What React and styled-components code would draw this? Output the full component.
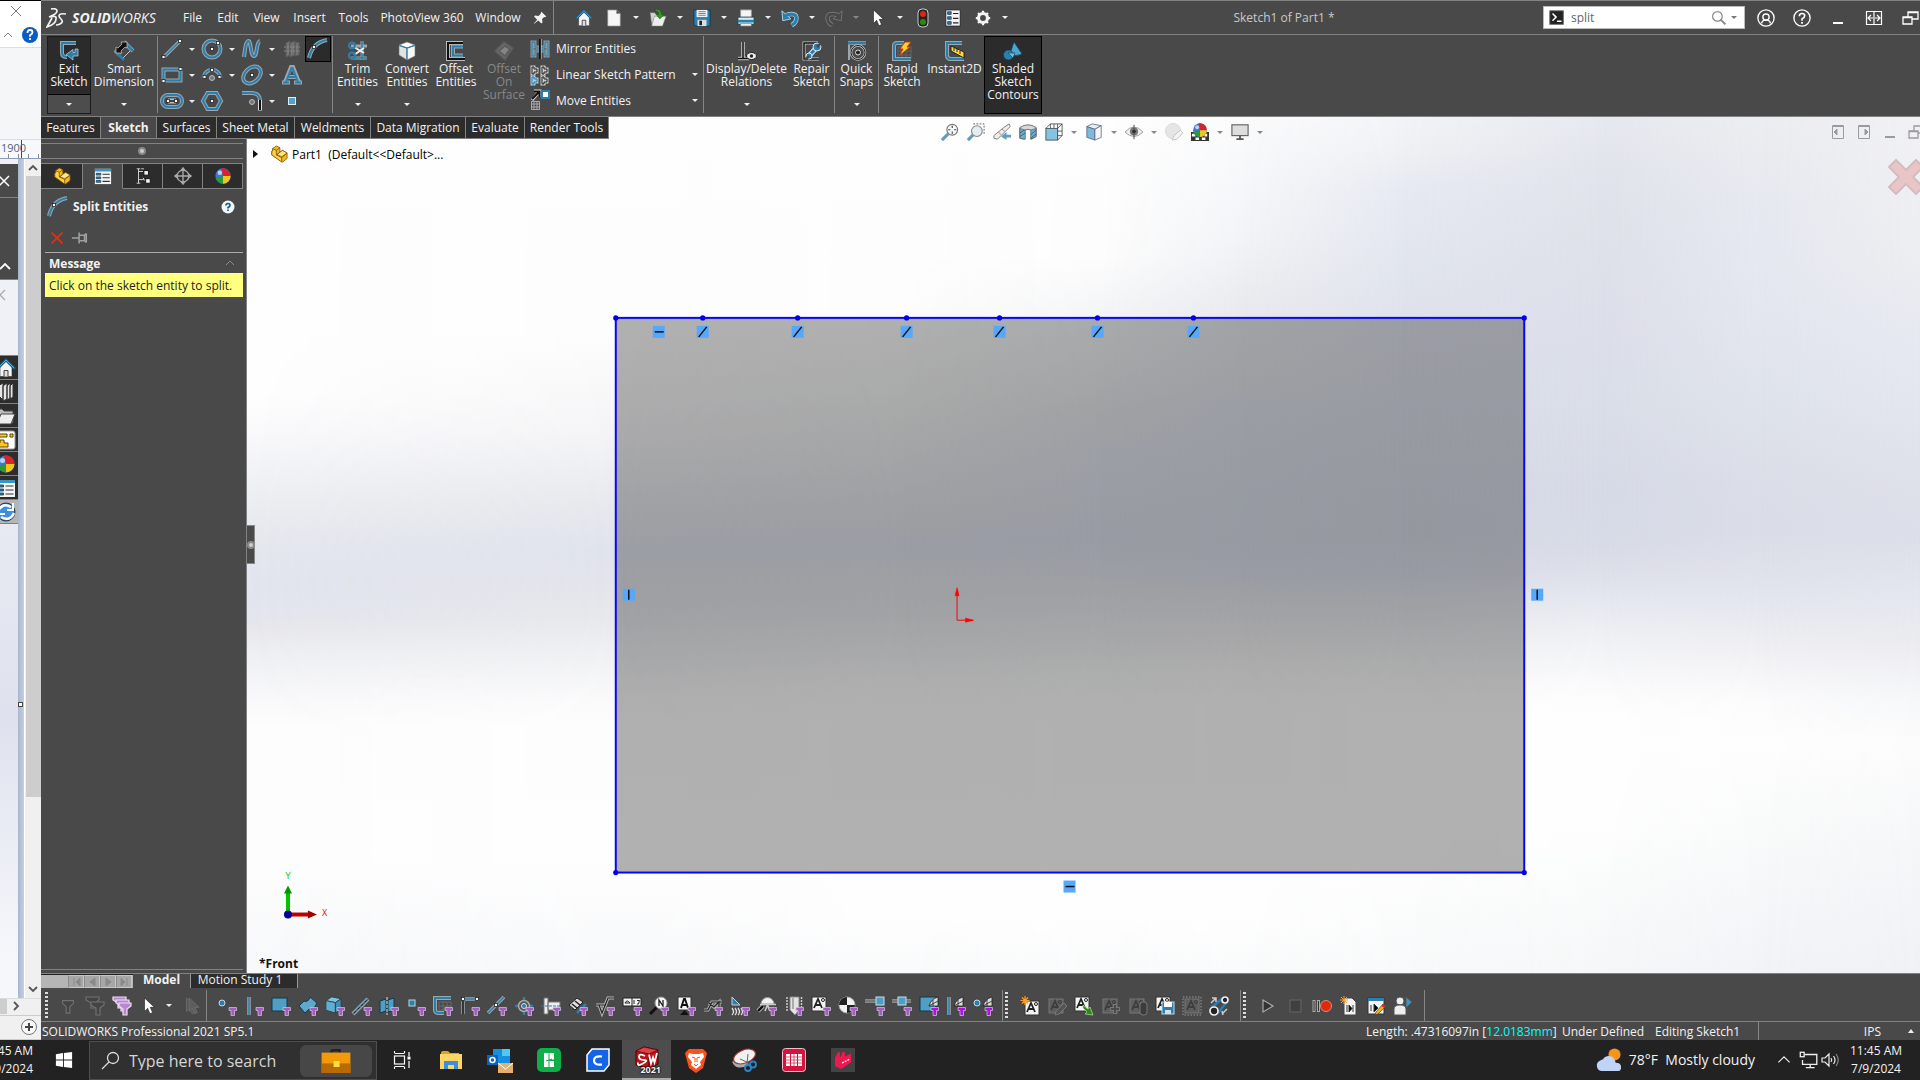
import React from "react";
import styled, { createGlobalStyle, css } from "styled-components";

const BLUE = "#2b7fae";
const RIM = "#9aa7ae";
const WHITE = "#f2f2f2";
const PANEL = "#494949";
const LINE = "#828282";

const Global = createGlobalStyle`
  *, *::before, *::after { box-sizing: border-box; }
  html, body { margin: 0; padding: 0; }
  body { overflow: hidden; background: #222; font: 12px/13px "Open Sans", "Noto Sans", sans-serif; color: ${WHITE}; }
  button, input { font: inherit; color: inherit; border: 0; padding: 0; margin: 0; background: none; border-radius: 0; }
  svg { display: block; flex: none; }
`;

/* ---------- icon drawing ---------- */

const Duo = ({ d, c = BLUE, w = 2, rim = RIM }) => (
  <g fill="none">
    <path d={d} stroke={rim} strokeWidth={w + 2} />
    <path d={d} stroke={c} strokeWidth={w} />
  </g>
);
const Pt = ({ x, y }) => <rect x={x - 1.5} y={y - 1.5} width="3" height="3" fill="#fff" stroke="#222" strokeWidth=".8" />;
const Funnel = ({ c = "#a35fc0" }) => <path d="M12 11.500h7.500v3h-2v5h-3.500v-5h-2z" fill={c} stroke="#dcc6e6" strokeWidth=".7" />;
const Pad = ({ off }) => (
  <g>
    <rect x="2" y="3" width="14" height="14" fill={off ? "#5e5e5e" : "#f4f4f4"} stroke={off ? "#777" : "#333"} />
    <path d="M4 14L8 5l4 9M5.500 11h5" stroke={off ? "#3d3d3d" : "#222"} strokeWidth="1.800" fill="none" />
    <circle cx="13" cy="6" r="1.500" fill="none" stroke={off ? "#3d3d3d" : "#222"} />
  </g>
);
const Ball = () => (
  <g>
    <circle cx="10" cy="10" r="8.500" fill="#3c78d8" />
    <path d="M10 10L8 1.700A8.500 8.500 0 0 1 18.500 10z" fill="#d8232a" />
    <path d="M10 10l8.500 0A8.500 8.500 0 0 1 10 18.500z" fill="#f3c51b" />
    <path d="M10 10v8.500A8.500 8.500 0 0 1 1.800 12z" fill="#2c9a37" />
    <circle cx="6.500" cy="6.500" r="2.500" fill="#fff" opacity=".65" />
  </g>
);
const House = () => (
  <g>
    <path d="M4 9v9.500h12V9l-6-6z" fill="#f4f4f4" stroke="#333" strokeWidth=".6" />
    <path d="M8 18.500v-6h4v6" fill="#ddd" stroke="#444" />
    <path d="M1 11L10 2l9 9" fill="none" stroke="#155e86" strokeWidth="2.800" />
    <path d="M2 10l8-8 8 8" fill="none" stroke="#5bb0d6" strokeWidth="1" />
  </g>
);
const PartShape = () => (
  <g stroke="#6b4b00" strokeWidth=".8" strokeLinejoin="round">
    <path d="M3 4l4-3 4 2v5l3-2 5 3v6l-5 4-12-8V7l1-.500z" fill="#f2b91c" />
    <path d="M3 4l4 2v5l6 3v5L2 11V7l1-.500z" fill="#ffd04a" />
    <path d="M7 6l4-3M7 11l4-3M13 14l6-5" fill="none" />
    <path d="M11 8l3-2 5 3-6 4-5-2z" fill="#ffe38a" />
  </g>
);
const ListShape = () => (
  <g>
    <rect x="1" y="2" width="18" height="17" fill="#f5f5f5" />
    <path d="M1 2h18v3H1z" fill="#3b95c1" />
    <path d="M2.500 7h5v2h-5zM2.500 11h5v2h-5zM2.500 15h5v2h-5z" fill={BLUE} stroke="#113a50" strokeWidth=".8" />
    <path d="M9.500 8h8M9.500 12h8M9.500 16h8" stroke="#333" strokeWidth="1.200" />
  </g>
);
const CursorShape = ({ c = "#fff", o = "#222" }) => <path d="M5 1v15l3.500-3.500L11 18.500l3-1.200-2.600-5.800H16z" fill={c} stroke={o} strokeWidth=".7" />;
const Cube = ({ a = "#7cc3e2", b = "#3b8fb8", c = "#5dafd4" }) => (
  <g stroke="#333" strokeWidth=".8" strokeLinejoin="round">
    <path d="M2 6l6-4 10 2-6 4z" fill={a} />
    <path d="M2 6l10 2v11L2 16z" fill={c} />
    <path d="M12 8l6-4v11l-6 4z" fill={b} />
  </g>
);

const glyphs = {
  /* ribbon */
  exit: <g><Duo d="M17 2H3v10q0 4 5 4" /><path d="M19 8v7h-5v4l-7-5.500 7-5v3h2V8z" fill={BLUE} stroke="#c8d4da" strokeWidth=".7" /></g>,
  smart: <g><path d="M2 10L10 2M9 17l8-8" stroke="#ccc" strokeWidth="1" /><path d="M1 9l5 5M10 1l9 9" stroke={RIM} strokeWidth="4" /><path d="M1 9l5 5M10 1l9 9" stroke={BLUE} strokeWidth="2.500" /><path d="M3 12l7 7" stroke={BLUE} strokeWidth="2.500" /><path d="M2 12V6l2 1 4-4-1-2h6v6l-2-1-4 4 1 2z" fill="#111" stroke="#ccc" strokeWidth=".7" /></g>,
  line: <g><Duo d="M2 18L18 2" w={1.500} /><Pt x={1.500} y={18} /><Pt x={18} y={2} /></g>,
  circle: <g><Duo d="M10 1.500a8.500 8.500 0 1 1 0 17a8.500 8.500 0 1 1 0-17z" /><Pt x={10} y={10} /><Pt x={16} y={4} /></g>,
  spline: <Duo d="M2 18C3 10 4 2 6.500 2S8.500 17 12 17 14 3 18 2" />,
  surfgrid: <g fill="#747474" stroke="#5a5a5a"><path d="M4 4l4-2v14l-4 2zM8 4l5-2v14l-5 2zM13 4l4-1v13l-4 1z" /><path d="M2 8h16M2 12h16" stroke="#8a8a8a" strokeDasharray="2 1" /></g>,
  split: <g><Duo d="M1 19C3 10 8 3 19 1" /><Pt x={6} y={8} /></g>,
  rect: <g><Duo d="M1.500 4.500h17v11h-17z" /><Pt x={1.500} y={16} /><Pt x={18.500} y={4} /></g>,
  arc: <g><Duo d="M1.500 13C3 2 17 2 18.500 13" /><circle cx="10" cy="13" r="2.500" fill="#777" stroke="#bbb" /><Pt x={2.500} y={12} /><Pt x={17.500} y={12} /><Pt x={10} y={5} /></g>,
  ellipse: <g><g transform="rotate(-42 10 10)"><Duo d="M0 10a10 7 0 1 1 20 0a10 7 0 1 1-20 0z" /></g><Pt x={10} y={10} /></g>,
  text: <g><path d="M0 17.500h8M12 17.500h8M3 17L9 2h2l6 15M6 12h8" stroke={RIM} strokeWidth="4" fill="none" /><path d="M1 17.500h6M13 17.500h6M4 17L9.500 3h1L16 17M7 12h6" stroke={BLUE} strokeWidth="2" fill="none" /></g>,
  slot: <g><Duo d="M6 4h8a5.500 5.500 0 0 1 0 12H6A5.500 5.500 0 0 1 6 4z" /><path d="M6 10h8" stroke="#b8c7cf" strokeWidth="5" /><path d="M5 10h10" stroke="#111" strokeWidth="1.500" /><Pt x={6} y={10} /><Pt x={14} y={10} /></g>,
  polygon: <g><Duo d="M5.500 2h9l4.500 8-4.500 8h-9L1 10z" /><Pt x={10} y={10} /></g>,
  fillet: <g><Duo d="M0 2h9c7 0 9 3 9 8" /><path d="M18 9v10.500" stroke="#ddd" strokeWidth="4" /><path d="M18 9v10" stroke="#111" strokeWidth="2" /><circle cx="10" cy="11" r="2.500" fill="#777" stroke="#bbb" /></g>,
  point: <rect x="6.500" y="6.500" width="7" height="7" fill="#4da3cc" stroke="#dfeef5" />,
  trim: <g><path d="M14 0v19M3 17h16M3 5h16" stroke={RIM} strokeWidth="3" /><path d="M14 0v19M3 17h16" stroke={BLUE} strokeWidth="1.500" /><path d="M6 6l10 6M6 14l10-7" stroke="#eee" strokeWidth="2" /><circle cx="4" cy="4.500" r="3" fill="none" stroke={BLUE} strokeWidth="2" /><circle cx="4" cy="14.500" r="3" fill="none" stroke={BLUE} strokeWidth="2" /></g>,
  convert: <g stroke="#777" strokeWidth=".6"><path d="M2 4l8-3 8 3-8 3z" fill="#fff" /><path d="M2 4l8 3v12l-8-5z" fill="#e2e2e2" /><path d="M10 7l8-3v11l-8 4z" fill="#f7f7f7" /><path d="M10 7v12M2 4.500L10 7l8-2.500" stroke={BLUE} strokeWidth="1.200" fill="none" /></g>,
  offset: <g><path d="M17 2H2v16h17" fill="none" stroke="#bbb" strokeWidth="4" /><path d="M17 2H2v16h17" fill="none" stroke="#111" strokeWidth="2" /><Duo d="M17 5.500H7v9h10" w={2} /></g>,
  offsurf: <g fill="#6a6a6a" stroke="#5a5a5a" strokeWidth="1.500"><path d="M1 10l9-9 9 6-8 12z" /><path d="M5 10l6-5 5 3-5 7z" fill="#858585" /></g>,
  mirror: <g><Duo d="M2 3h3v5h3v4H5v5H2zM18 3h-3v5h-3v4h3v5h3z" w={1} rim="#8a9aa2" /><path d="M10 0v20" stroke="#111" strokeWidth="2" /><path d="M11.300 0v20" stroke="#ccc" strokeWidth=".7" /></g>,
  pattern: <g><Duo d="M2 2h2v2h3v3H4v2H2zM12 2h2v2h3v3h-3v2h-2z" w={1} c="#222" rim="#ccc" /><Duo d="M12 12h2v2h3v3h-3v2h-2z" w={1} c="#222" rim="#ccc" /><Duo d="M2 12h2v2h3v3H4v2H2z" w={1} rim="#aaccdd" /></g>,
  move: <g><path d="M2 10L9 2M4 1h6v6" stroke="#ddd" strokeWidth="3" fill="none" /><path d="M2 9l7-7M4 1.500h5.500V7" stroke="#111" strokeWidth="2" fill="none" /><rect x="12" y="1" width="7" height="7" fill="#fff" stroke={BLUE} strokeWidth="2" /><path d="M1.500 11.500h8v8h-8zM4 11.500v8M7 11.500v8M1.500 14h8M1.500 17h8" fill="none" stroke="#aaa" /></g>,
  relations: <g><Duo d="M6 1v16M1 17.500h11" w={1.500} c="#111" rim="#ccc" /><ellipse cx="14.500" cy="15" rx="5" ry="3.500" fill="#eee" stroke="#222" /><circle cx="14.500" cy="15" r="1.700" fill="#222" /></g>,
  repair: <g><path d="M16 2H2v16h15" fill="none" stroke="#ccc" strokeWidth="3" /><path d="M16 2H2v16h15" fill="none" stroke="#111" strokeWidth="1.500" /><path d="M6 16l9-10" stroke="#d4e8f2" strokeWidth="5" /><path d="M6 16l9-10" stroke={BLUE} strokeWidth="3" /><circle cx="15" cy="6" r="4" fill={BLUE} stroke="#d4e8f2" /><circle cx="7" cy="15" r="3" fill={BLUE} stroke="#d4e8f2" /><path d="M15 6l4-4M7 15l-4 4" stroke="#494949" strokeWidth="2.500" /></g>,
  quick: <g><path d="M1 2h18" stroke={RIM} strokeWidth="3.500" /><path d="M1 2h18" stroke={BLUE} strokeWidth="2" /><path d="M2 4v15" stroke={RIM} strokeWidth="2" /><circle cx="11" cy="11.500" r="7" fill="none" stroke="#bbb" strokeWidth="2.500" /><circle cx="11" cy="11.500" r="7" fill="none" stroke="#222" strokeWidth="1" /><circle cx="11" cy="11.500" r="2.500" fill="#222" stroke="#ddd" /></g>,
  rapid: <g><path d="M6 6h13v12H6zM10 6v12M14 6v12M6 10h13M6 14h13" stroke="#666" fill="none" /><Duo d="M12 2H5Q2 2 2 5v13h17" /><path d="M13 1h6l-4 5h3L7 15l4-7H8z" fill="#ffcf2a" stroke="#c33a12" /></g>,
  instant: <g><Duo d="M17 2H2v12q0 4 4 4h13" /><path d="M6 5l13 6v6L6 10z" fill="#ffd84a" stroke="#222" /><path d="M9 7v3M12 8v3M15 10v3" stroke="#222" /></g>,
  shaded: <g stroke="#123c52" strokeWidth=".6"><path d="M11 1l8 12q-6 3-12 0z" fill="#4ba6cf" /><circle cx="5.500" cy="14" r="5" fill={BLUE} /><path d="M5 12h7l-2 5z" fill="#6dbbdd" /></g>,

  /* quick access */
  home: <House />,
  newdoc: <path d="M3 1h10l4 4v14H3zM13 1v4h4" fill="#f6f6f6" stroke="#888" strokeWidth=".8" />,
  open: <g><path d="M1 4h5l2 2h6v12H3z" fill="#d2d2d2" stroke="#555" strokeWidth=".7" /><path d="M6 8h13l-4 11H3z" fill="#eee" stroke="#777" strokeWidth=".6" /><path d="M7 0q7 0 7 6h3l-5 5-4-5h3q0-3-4-4z" fill="#2f9a1d" stroke="#0e5a05" strokeWidth=".6" /></g>,
  save: <g><path d="M1 1h18v18H3l-2-2z" fill={BLUE} stroke="#0e3a52" /><path d="M4 1h12v8H4z" fill="#f2f2f2" /><path d="M6 3h8M6 5h8M6 7h8" stroke="#777" /><path d="M5 12h10v7H5z" fill="#ddd" /><path d="M7 13h3v5H7z" fill="#222" /></g>,
  print: <g><path d="M4 1h12v9H4z" fill="#f6f6f6" stroke="#999" /><path d="M1 9h18v8H1z" fill="#d9eef8" stroke="#144" /><path d="M1 12h18v3H1z" fill={BLUE} /><path d="M4 16h12v3H4z" fill="#eee" stroke="#666" strokeWidth=".6" /></g>,
  undo: <g><path d="M5 7q13-4 12 4 0 4-5 7" fill="none" stroke="#b5dcef" strokeWidth="5" /><path d="M1 2l1 11 9-2z" fill={BLUE} stroke="#b5dcef" /><path d="M5 7q13-4 12 4 0 4-5 7" fill="none" stroke={BLUE} strokeWidth="3.500" /></g>,
  redo: <g><path d="M15 7Q2 3 3 11q0 4 5 7" fill="none" stroke="#777" strokeWidth="5" /><path d="M19 2l-1 11-9-2z" fill="#494949" stroke="#777" /><path d="M15 7Q2 3 3 11q0 4 5 7" fill="none" stroke="#494949" strokeWidth="3" /></g>,
  cursor: <CursorShape />,
  light: <g><rect x="5" y="1" width="10" height="18" rx="4" fill="#222" stroke="#ccc" /><circle cx="10" cy="6" r="3" fill="#d8280f" /><circle cx="10" cy="14" r="3" fill="#2c8a14" /></g>,
  options: <g><rect x="2" y="1" width="16" height="18" fill="#f4f4f4" stroke="#222" /><path d="M4 3h4v3H4zM4 8.500h4v3H4zM4 14h4v3H4z" fill={BLUE} stroke="#123" strokeWidth=".7" /><path d="M10 5h6M10 10.500h6M10 15.500h6" stroke="#222" strokeWidth="1.300" /></g>,
  gear: <g><circle cx="10" cy="10" r="5" fill="none" stroke="#f4f4f4" strokeWidth="3.500" /><path d="M10 2v3M10 15v3M2 10h3M15 10h3M4.500 4.500l2 2M13.500 13.500l2 2M4.500 15.500l2-2M13.500 6.500l2-2" stroke="#f4f4f4" strokeWidth="2.500" /></g>,
  pushpin: <path d="M12 1l7 7-2 1-1-.500-3 3 .5 5-1.500 1.500-4.500-4.500L2 18l-1 .5.500-1 4.500-5L1.500 8 3 6.500l5 .5 3-3L11 3z" fill="#f2f2f2" />,

  /* window controls */
  user: <g fill="none" stroke="#fff" strokeWidth="1.500"><circle cx="10" cy="10" r="9" /><circle cx="10" cy="9" r="3.500" /><path d="M5 16q1-4 5-4t5 4" /></g>,
  helpring: <g fill="none" stroke="#fff" strokeWidth="1.500"><circle cx="10" cy="10" r="9" /><path d="M7 8q0-3 3-3t3 2.500q0 2-3 3.500v2" strokeWidth="1.800" /><path d="M10 14.500v2" strokeWidth="2" /></g>,
  min: <path d="M5 15h10" stroke="#fff" strokeWidth="2" />,
  span: <path d="M2.500 3.500h15v13h-15zM10 3.500v13M4 10h5M11 10h5M7 7l-3 3 3 3M13 7l3 3-3 3" fill="none" stroke="#fff" strokeWidth="1.200" />,
  restore: <path d="M3 9h9v7H3zM3 9.500h9M8 9V4h10v7h-6M8 4.500h10" fill="none" stroke="#fff" strokeWidth="1.300" />,
  dleft: <g fill="none" stroke="#9a9ba0"><path d="M4.500 3.500h11v13h-11z" /><path d="M4 4.500h12" /><path d="M9 7v6l-3-3z" fill="#9a9ba0" /></g>,
  dright: <g fill="none" stroke="#9a9ba0"><path d="M4.500 3.500h11v13h-11z" /><path d="M4 4.500h12" /><path d="M11 7v6l3-3z" fill="#9a9ba0" /></g>,
  dmin: <path d="M5 15h10" stroke="#9a9ba0" strokeWidth="2" />,
  drestore: <path d="M3 9h9v7H3zM3 9.500h9M8 9V4h10v7h-6" fill="none" stroke="#9a9ba0" strokeWidth="1.300" />,

  /* heads-up view toolbar */
  zoomfit: <g><path d="M1 19l7-7" stroke="#5f9fbd" strokeWidth="3.500" /><circle cx="12.500" cy="7.500" r="6" fill="#f4f8fa" stroke="#777" strokeWidth="1.300" /><path d="M12.500 3v2.500M12.500 9.500V12M8 7.500h2.500M14.500 7.500H17" stroke="#444" strokeWidth="1.300" /></g>,
  zoomarea: <g><path d="M7 1h12v12" fill="none" stroke="#555" strokeDasharray="2 1.500" /><path d="M1 19l6-6" stroke="#5f9fbd" strokeWidth="3.500" /><circle cx="11" cy="9" r="6" fill="#e3edf2" stroke="#888" strokeWidth="1.200" /></g>,
  prev: <g><path d="M1 14L12 5l6-4 1 3-3 3-11 11-4-1z" fill="#eee" stroke="#777" /><path d="M6 10l3 3M10 7l3 2" stroke="#888" /><path d="M20 13h-5v-3l-6 5 6 4v-3h5z" fill="#5f9fbd" /></g>,
  section: <g><path d="M1 5q9-6 18 0v10l-5 3V8q-4-2-8 0v10l-5-1z" fill="#d8d8d8" stroke="#666" /><path d="M1 6l6 2v10l-6-1zM13 8l6-2v9l-6 3z" fill="#6fb0cc" stroke="#456" strokeWidth=".7" /><path d="M1 11l5-3M1 15l6-4M13 13l6-5M13 17l6-5" stroke="#345" strokeWidth=".8" /></g>,
  orient: <g><path d="M6 1h13v13H6zM1 6l5-5M14 1v18M19 1l-5 5M19 14l-5 5M10 1v5M6 9h13" stroke="#444" strokeWidth=".9" fill="none" /><rect x="1" y="6" width="13" height="13" fill="#86c3de" stroke="#456" /></g>,
  display: <g stroke="#557" strokeWidth=".8"><path d="M2 4l6-3 10 2-7 4z" fill="#e4eff4" /><path d="M2 4l9 3v12l-9-3z" fill="#79bbd8" /><path d="M11 7l7-4v13l-7 3z" fill="#f2f6f8" /></g>,
  eye: <g><path d="M0 10q10-11 20 0-10 10-20 0z" fill="#eee" stroke="#999" /><circle cx="10" cy="9.500" r="4.500" fill="#777" /><circle cx="10" cy="9.500" r="2" fill="#222" /><path d="M10 2v16" stroke="#444" /></g>,
  editapp: <g opacity=".75"><circle cx="9" cy="9" r="8.500" fill="#dedede" stroke="#ccc" /><path d="M8 19l2-5 7-6 3 3-7 7z" fill="#f2f2f2" stroke="#aaa" /></g>,
  scene: <g><path d="M0 10h20v10H0z" fill="#333" /><path d="M1 12h4v3H1zM15 12h3v3h-3zM5 16h4v3H5zM12 16h4v3h-4z" fill="#fff" /><g transform="translate(1 -1) scale(.9)"><Ball /></g></g>,
  monitor: <g><rect x="1" y="2" width="18" height="12" fill="#ddd" stroke="#666" strokeWidth="1.300" /><path d="M10 14v3M6 18h8" stroke="#555" strokeWidth="2" /></g>,

  /* property manager */
  part: <PartShape />,
  list: <ListShape />,
  config: <g><path d="M5 2v16M5 5h5M5 14h6" stroke="#ddd" strokeWidth="1" fill="none" /><rect x="11" y="4" width="5" height="5" fill="#f2f2f2" stroke="#111" /><rect x="13" y="13" width="5" height="5" fill="#f2f2f2" stroke="#111" /><path d="M3 2h4M8 2h3M3 18h4M10 12l2 3" stroke="#ddd" /></g>,
  target: <g fill="none" stroke="#aaa" strokeWidth="1.500"><circle cx="10" cy="10" r="6.500" /><path d="M10 1v18M1 10h18" /><path d="M10 0l3 4H7zM10 20l3-4H7zM0 10l4-3v6zM20 10l-4-3v6z" fill="#aaa" strokeWidth=".3" /></g>,
  ball: <Ball />,
  helpball: <g><circle cx="10" cy="10" r="6.500" fill="#f0f6fa" /><path d="M8 8.500q0-2 2-2t2 1.700q0 1.300-2 2.300v1M10 12.500v1.500" fill="none" stroke="#17597c" strokeWidth="1.700" /></g>,
  cancel: <path d="M3 3l14 14M17 3L3 17" stroke="#e03010" strokeWidth="2.200" />,
  keep: <path d="M1 10h8M9 4v12M9 7h6v6H9M17 5v10M15 7l2-2M15 13l2 2" fill="none" stroke="#a0a0a0" strokeWidth="1.700" />,
  chev: <path d="M6 12l4-4 4 4" fill="none" stroke="#888" />,

  /* selection toolbar */
  filt: <path d="M4 4h12v3l-4 4v7H8v-7L4 7z" fill="#444" stroke="#707070" strokeWidth="1.300" />,
  filts: <g fill="#444" stroke="#707070" strokeWidth="1.200"><path d="M1 1h13v3l-4 3v5H6V7L1 4z" /><path d="M6 6h13v3l-4 3v7h-4v-7L6 9z" /></g>,
  filtp: <g fill="#b987d0" stroke="#f0dff7" strokeWidth="1.200"><path d="M1 1h13v3l-4 3v5H6V7L1 4z" /><path d="M4 4h13v3l-4 3v5H9v-5L4 7z" /><path d="M7 7h12v3l-4 3v6h-4v-6L7 10z" /></g>,
  cursoff: <g><CursorShape c="#555" o="#777" /><g transform="translate(3 0)"><CursorShape c="#5d5d5d" o="#777" /></g></g>,
  fPoint: <g><circle cx="5" cy="7" r="3" fill={BLUE} stroke="#c3dbe6" /><Funnel /></g>,
  fEdge: <g><Duo d="M5 1v18" w={1.500} /><Funnel /></g>,
  fFace: <g><rect x="1" y="2" width="15" height="13" fill="#4f9fc5" stroke="#0f3a50" /><Funnel /></g>,
  fSurf: <g><path d="M1 10l5-5q4 2 6-4l7 6q-4 8-8 6l-4 4z" fill="#5ca9cc" stroke="#0f3a50" /><Funnel /></g>,
  fSolid: <g><g transform="translate(-1 -1) scale(.95)"><Cube /></g><Funnel /></g>,
  fAxis: <g><Duo d="M1 18L16 3" /><path d="M2 17L15 4" stroke="#222" strokeDasharray="3 2" /><Funnel /></g>,
  fPlane: <g><path d="M1 5l6-2v12l-6 2zM9 4l6-2v12l-6 2z" fill="#4f9fc5" stroke="#0f3a50" /><path d="M8 1v18" stroke="#ddd" strokeDasharray="3 1" /><Funnel /></g>,
  fSkPt: <g><rect x="3" y="4" width="6" height="6" fill={BLUE} stroke="#bcd6e2" /><Funnel /></g>,
  fSketch: <g><path d="M6 6h12v8H6zM10 6v10M14 6v10M6 10h12" stroke="#6a6a6a" fill="none" /><Duo d="M18 2H2v12q0 3 4 3h5" /><Funnel /></g>,
  fSeg: <g><Duo d="M3 3h14" w={1.500} /><Duo d="M3 3v15" w={1.500} c="#111" /><Pt x={3} y={3} /><Pt x={17} y={3} /><Funnel /></g>,
  fMid: <g><Duo d="M1 17L17 1" w={1.500} /><Pt x={9} y={9} /><Funnel /></g>,
  fCenter: <g><path d="M10 1v18M1 10h18" stroke={BLUE} strokeWidth="2.500" /><circle cx="10" cy="10" r="5.500" fill="#555" stroke="#aaa" strokeWidth="1.500" /><circle cx="10" cy="10" r="2.500" fill={BLUE} stroke="#ddd" /><Funnel /></g>,
  fCl: <g><path d="M3 2h4v16H3zM7 6h12v8H7z" fill="#eee" stroke="#777" /><path d="M0 10h20" stroke={BLUE} strokeDasharray="3 1" /><Funnel /></g>,
  fDim: <g><path d="M1 9l8-7 6 4-8 8z" fill="#ddd" stroke="#222" /><path d="M4 8l5 4M7 5l5 4" stroke="#222" strokeWidth="1.600" /><path d="M9 17l9-9" stroke={BLUE} strokeWidth="2.500" /><Funnel /></g>,
  fFinish: <g><Duo d="M1 9h3l3 8 6-15h6M4 9h7" w={1.200} c="#222" rim="#bbb" /><Funnel /></g>,
  fGtol: <g><path d="M1 2h18v8H1zM10 2v8" fill="#f2f2f2" stroke="#222" /><path d="M3 7q2-4 5 0zM12 4v4M15 4.500h2.500l-1 3.500H15" stroke="#222" fill="none" /><Funnel /></g>,
  fNote: <g><path d="M1 18l7-7" stroke="#111" strokeWidth="3" /><circle cx="12" cy="7" r="6" fill="#f5f5f5" stroke="#999" /><path d="M10 10V4l4 6V4" fill="none" stroke="#222" strokeWidth="1.300" /><Funnel /></g>,
  fDatum: <g><rect x="2" y="1" width="13" height="13" fill="#f5f5f5" stroke="#333" /><path d="M5 12l3-9h1l3 9M6 9h5" fill="none" stroke="#111" strokeWidth="1.900" /><path d="M4 19h9l-4.500-5z" fill="#111" /><Funnel /></g>,
  fWeld: <g><Duo d="M1 14h4l4-8h10M6 7l5 4 5-5v5" w={1.200} c="#222" rim="#aaa" /><Funnel /></g>,
  fBead: <g><path d="M2 1v8h8z" fill={BLUE} stroke="#ccc" /><path d="M2 12q3 4 0 7M5 12q3 4 0 7M8 12q3 4 0 7M11 12q3 4 0 7" fill="none" stroke="#ddd" strokeWidth="1.300" /><Funnel /></g>,
  fTarget: <g><path d="M1 15l5-5" stroke="#ddd" strokeWidth="4" /><path d="M1 15l5-5" stroke="#111" strokeWidth="2.500" /><path d="M4 8a6.500 6.500 0 0 1 13 0z" fill="#f2f2f2" stroke="#999" /><path d="M3 8.500h16M8 15l2.500-6L13 15" stroke="#ccc" strokeWidth="1.600" fill="none" /><Funnel /></g>,
  fThread: <g><path d="M6 1h9v13l-4 5-5-5z" fill="#e4e4e4" stroke="#888" /><path d="M3 1v14M17.500 1v10" stroke="#ccc" strokeDasharray="2 1" strokeWidth="1.500" /><path d="M9 2v11" stroke="#aaa" strokeWidth="2" /><Funnel /></g>,
  fBlock: <g><g transform="translate(-1 -2)"><Pad /></g><Funnel /></g>,
  fCom: <g><circle cx="9" cy="9" r="8" fill="#f2f2f2" stroke="#aaa" /><path d="M9 9V1a8 8 0 0 0-8 8zM9 9v8a8 8 0 0 0 8-8z" fill="#222" /><Funnel /></g>,
  fConn: <g><path d="M0 5h12" stroke="#ccc" strokeWidth="3" /><path d="M0 5h12" stroke="#222" strokeWidth="1" /><rect x="11" y="1" width="8" height="8" fill="#4f9fc5" stroke="#bfe0ef" /><Funnel /></g>,
  fRoute: <g><path d="M0 5h19" stroke="#ccc" strokeWidth="3" /><path d="M0 5h19" stroke="#222" strokeWidth="1" /><rect x="6" y="1" width="8" height="8" fill="#4f9fc5" stroke="#bfe0ef" /><Funnel /></g>,
  fMeshFace: <g><rect x="1" y="1" width="16" height="14" fill="#4f9fc5" stroke="#0f3a50" /><path d="M19 1v9h-9q2-7 9-9zM14 10V4M10 10l9-5" fill="#ddd" stroke="#222" strokeWidth=".8" /><Funnel c="#b010e0" /></g>,
  fMeshEdge: <g><Duo d="M3 1v18" w={1.500} /><path d="M17 1v9H8q2-7 9-9zM12 10V4M8 10l9-5" fill="#ddd" stroke="#222" strokeWidth=".8" /><Funnel c="#b010e0" /></g>,
  fMeshPt: <g><circle cx="4" cy="7" r="3" fill={BLUE} stroke="#c3dbe6" /><path d="M19 1v9h-9q2-7 9-9zM14 10V4M10 10l9-5" fill="#ddd" stroke="#222" strokeWidth=".8" /><Funnel c="#b010e0" /></g>,
  bNew: <g><g transform="translate(3 2)"><Pad /></g><path d="M5 0v9M.500 4.500h9M2 1.500l6 6M8 1.500l-6 6" stroke="#ff9c2a" strokeWidth="1.200" /></g>,
  bEdit: <g><Pad off /><path d="M8 19l1-4 8-8 3 3-8 8z" fill="#555" stroke="#777" /></g>,
  bInsert: <g><g transform="translate(-1 -2)"><Pad /></g><path d="M9 9l5 4 2-2 3 8-8-1 2-2-4-4z" fill="#2f8a10" stroke="#b8dca8" strokeWidth=".7" /></g>,
  bAdd: <g><Pad off /><path d="M14 8v10M9 13h10" stroke="#777" strokeWidth="4" /><path d="M14 9v8M10 13h8" stroke="#4b4b4b" strokeWidth="2" /></g>,
  bRebuild: <g><Pad off /><rect x="12" y="6" width="7" height="13" rx="3" fill="#3c3c3c" stroke="#777" /></g>,
  bSave: <g><g transform="translate(-1 -2)"><Pad /></g><rect x="7" y="6" width="12" height="12" fill={BLUE} stroke="#c0dce9" /><path d="M9 6h8v5H9z" fill="#fff" /><path d="M10 14h6v4h-6z" fill="#ddd" /></g>,
  bExplode: <g><rect x="1" y="1" width="18" height="18" fill="none" stroke="#707070" strokeWidth="2" strokeDasharray="1.500 1.500" /><g transform="translate(1 0)"><Pad off /></g></g>,
  bBelt: <g><path d="M3 11L14 2M8 18l10-12" stroke={BLUE} strokeWidth="2.500" /><circle cx="5" cy="15" r="4" fill="#222" stroke="#eee" strokeWidth="1.700" /><circle cx="16" cy="4" r="3" fill="#222" stroke="#eee" strokeWidth="1.700" /><path d="M2 7l5-5M3 2h4v4M13 18l5-5M14 19l-1-4" stroke="#ccc" strokeWidth="1.500" fill="none" /></g>,
  play: <path d="M5 4v12l10-6z" fill="#333" stroke="#aaa" strokeWidth="1.200" />,
  stop: <rect x="5" y="4" width="11" height="12" fill="#404040" stroke="#666" />,
  record: <g><path d="M2 4v12M6.500 4v12" stroke="#aaa" strokeWidth="3" /><path d="M2 5v10M6.500 5v10" stroke="#333" strokeWidth="1" /><circle cx="14" cy="10" r="5.500" fill="#dc2a0c" stroke="#f5b0a0" strokeWidth=".7" /></g>,
  macroNew: <g><path d="M5 2h8l4 4v13H5z" fill="#f4f4f4" stroke="#444" /><path d="M8 9v7M14 9v7M10 9l3 3.500-3 3.500z" stroke="#333" /><path d="M5 0v8M1 4h8M2 1l6 6M8 1L2 7" stroke="#ff9c2a" /></g>,
  macroEdit: <g><rect x="2" y="2" width="16" height="16" fill="#f4f4f4" stroke="#333" /><path d="M2 2h16v3H2z" fill={BLUE} /><path d="M5 9v6M8 8l4 4-4 4z" stroke="#333" /><path d="M9 19l1-3 7-8 3 2-8 8z" fill="#f0b020" stroke="#333" strokeWidth=".6" /><path d="M17 8l3 2-1.500 2-3-2z" fill="#d22" /></g>,
  macroUser: <g fill="#eee" stroke="#555"><circle cx="7" cy="5" r="4" /><path d="M1 19v-6q0-4 6-4t6 4v6z" /><path d="M13 1v11l6-6z" fill="#3c95c4" /></g>,

  /* task pane */
  books: <g fill="#e6e6e6" stroke="#333"><path d="M2 4l5-3v17l-5-5zM7 4l4-3v16l-4 2zM11 4l3-3v15l-3 2zM14 4l3-3v14l-3 2z" /></g>,
  folder: <g stroke="#444"><path d="M0 3h6l2 2h9v12H0z" fill="#bbb" /><path d="M5 8h14l-4 10H1z" fill="#eee" /></g>,
  palette: <g><rect x="-2" y="1" width="21" height="18" rx="2" fill="#fff" stroke="#999" /><path d="M0 4h11v3H0zM14 4h3v3h-3zM4 10h4v3h4v4H0v-4h4z" fill="#ffc91c" stroke="#5b4200" /></g>,
  sync: <g fill="none"><circle cx="10" cy="10" r="9" fill="#3f8fe0" stroke="#234" /><path d="M2 9q5-9 13-4M18 11q-4 9-13 4" stroke="#fff" strokeWidth="2.500" /><path d="M17 1v7h-6M3 19v-7h6" stroke="#fff" strokeWidth="2" /></g>,

  /* taskbar */
  win: <path d="M1 3.500l8-1.200v7.200H1zM10 2.100L19 1v8.500h-9zM1 10.500h8v7.200l-8-1.200zM10 10.500h9V19l-9-1.200z" fill="#fff" />,
  search: <g fill="none" stroke="#ddd" strokeWidth="1.300"><circle cx="12" cy="7" r="5.500" /><path d="M8 11l-7 7" /></g>,
  searchdark: <g fill="none" stroke="#888" strokeWidth="1.500"><circle cx="8" cy="8" r="6" /><path d="M12 12l6 6" strokeWidth="2.500" /></g>,
  prompt: <g><rect x="2" y="2" width="15" height="15" fill="#222" stroke="#666" /><path d="M5 5l4 4-4 4M10 13.500h5" fill="none" stroke="#fff" strokeWidth="1.700" /></g>,
  case: <g><path d="M6 3q0-2 2-2h5v2" fill="none" stroke="#222" strokeWidth="2" /><rect x="-2" y="3" width="24" height="17" fill="#f39a0a" /><path d="M-2 12h24v8H-2z" fill="#b96a02" /><path d="M8 10h5v5H8z" fill="#ffe03a" /></g>,
  taskview: <g fill="none" stroke="#fff" strokeWidth="1.200"><rect x="2.500" y="6" width="10" height="8" /><path d="M2.500 3V1M12.500 3V1M2.500 3.500h10M2.500 16.500h10M2.500 17v2M12.500 17v2M17 2v4M17 11v7" /><path d="M15.500 8h3" strokeWidth="3" /></g>,
  explorer: <g><path d="M0 3q0-2 2-2h5l2 2h9v5H0z" fill="#e2a215" /><path d="M-1 4h22v15H-1z" fill="#ffd566" /><path d="M3 19v-8h14v8h-4v-4H7v4z" fill="#3b8fdc" /></g>,
  outlook: <g><path d="M3-1h17v15H3z" fill="#1490df" /><path d="M12-1h8v7h-8z" fill="#50c8f5" /><path d="M-3 5H8v10H-3z" fill="#0a64b8" /><circle cx="2.500" cy="10" r="2.500" fill="none" stroke="#fff" strokeWidth="1.500" /><path d="M8 13h15v10H8z" fill="#e5b06c" /><path d="M8 13l7.500 6 7.500-6" fill="none" stroke="#fff" /></g>,
  green: <g><rect x="-2" y="-2" width="24" height="24" rx="5" fill="#0fae48" /><path d="M5 3h4.500v14H5zM10.500 3H15v6.500h-4.500zM10.500 11H15v6h-4.500z" fill="#fff" /><path d="M7 11l6-2" stroke="#0fae48" /></g>,
  cblue: <g><path d="M4-1h17v16l-5 6H-1V5z" fill="#1464e8" stroke="#fff" strokeWidth="1.500" /><path d="M14 6.500q-8-1-8 4t8 4" fill="none" stroke="#fff" strokeWidth="2.200" /></g>,
  sw: <g><path d="M-1 2l8-4 14 3v14l-9 5-13-4z" fill="#b8141b" stroke="#4a0306" /><path d="M-1 2l8-4 14 3-9 4z" fill="#df4246" stroke="#4a0306" strokeWidth=".7" /><path d="M12 5v15" stroke="#4a0306" /><path d="M8 7Q2 4 2 7.500T7 11t-1 3.500-5-1" fill="none" stroke="#fff" strokeWidth="1.800" /><path d="M12 5.500l2 9 2-6 1.500 5L20 4" fill="none" stroke="#fff" strokeWidth="1.800" /></g>,
  brave: <g><path d="M3-1h14l4 4-1 4-3 11-7 5-7-5L0 7l-1-4z" fill="#f9521f" /><path d="M3 3l4 1h6l4-1 1 4-4 5 1 3-5 4-5-4 1-3-4-5z" fill="#fff" /><path d="M6 7l3 1v4M14 7l-3 1v4M8 14l2 2 2-2" stroke="#f9521f" fill="none" /></g>,
  snip: <g><path d="M-1 11q3 8 14 2" stroke="#aaa" strokeWidth="4" fill="none" /><ellipse cx="9.500" cy="6.500" rx="11.500" ry="6.500" transform="rotate(-22 9.500 6.500)" fill="#f0f0f0" stroke="#b03030" /><path d="M5 9l9 4M13 4l-1 10" stroke="#666" /><circle cx="13" cy="18" r="3" fill="none" stroke="#2a86c8" strokeWidth="1.800" /><circle cx="18" cy="14.500" r="3" fill="none" stroke="#2a86c8" strokeWidth="1.800" /></g>,
  keys: <g><rect x="-1.500" y="-1.500" width="23" height="23" rx="3" fill="#d4143c" stroke="#f2c0cc" /><path d="M2 4h4v12H2zM7 4h6v12H7zM14 4h4v12h-4z" fill="#fff" /><path d="M2 7h16M2 10h16M2 13h16M10 4v12" stroke="#d4143c" strokeWidth=".7" /></g>,
  factory: <g><rect x="-2" y="-2" width="24" height="24" fill="#434343" /><path d="M2 8l3-6 2 .500v5l3-6 2 1v4l6-3v9L8 19l-6-3z" fill="#f0174e" /><path d="M9 13l8-4" stroke="#fff" strokeWidth="1.300" strokeDasharray="2 1" /></g>,
  weather: <g><circle cx="15" cy="5" r="5.500" fill="#f7941e" /><path d="M3 20a5 5 0 0 1-1-9.500q3-1 4-3 6-3 9 2 1 2 1 3 5 0 5 4t-4 3.500z" fill="#bfd4f6" /></g>,
  up: <path d="M3 13l7-7 7 7" fill="none" stroke="#eee" strokeWidth="1.400" />,
  net: <g fill="none" stroke="#eee" strokeWidth="1.200"><path d="M7 5h11v9H5v-4M12 14v3M8 17h8" /><rect x="3" y="3" width="3.500" height="4" /></g>,
  vol: <g fill="none" stroke="#eee" strokeWidth="1.200"><path d="M2 8h3l4-4v12l-4-4H2zM11 8q1.500 2 0 4M13.500 6q3 4 0 8" /><path d="M16 4q4.500 6 0 12" stroke="#888" /></g>,
};

const Icon = ({ name, size = 20 }) => (
  <svg width={size} height={size} viewBox="0 0 20 20" overflow="visible" aria-hidden="true">{glyphs[name]}</svg>
);

/* ---------- shared parts ---------- */

const Row = styled.div`display: flex; align-items: center;`;
const IconButton = styled.button`
  display: flex; align-items: center; justify-content: center;
  width: ${(p) => p.$w || 28}px; height: 26px; flex: none;
  ${(p) => p.$active && css`background: #2b2b2b; border: 1px solid #000;`}
`;
const CaretButton = styled.button`
  width: ${(p) => p.$w || 12}px; height: 20px; flex: none; display: flex; align-items: center; justify-content: center;
  &::before { content: ""; border: 3px solid transparent; border-top-color: ${(p) => p.$c || "#f0f0f0"}; border-bottom: 0; }
`;
const Caret = styled.span`border: 3px solid transparent; border-top-color: #f0f0f0; border-bottom: 0;`;
const Divider = styled.span`width: 1px; align-self: stretch; flex: none; background: #858585; margin: 0 ${(p) => p.$after || 0}px 0 ${(p) => p.$before || 0}px;`;
const Spacer = styled.span`flex: 1;`;
const IB = ({ name, label, w, active, size }) => (
  <IconButton type="button" aria-label={label || name} $w={w} $active={active}><Icon name={name} size={size} /></IconButton>
);

/* ---------- page ---------- */

const Page = styled.div`display: grid; grid-template-rows: minmax(0, 1fr) 40px; height: 100vh;`;
const Desktop = styled.div`display: flex; min-height: 0;`;
const Main = styled.main`flex: 1; min-width: 0; display: flex; flex-direction: column; background: ${PANEL};`;

/* title bar */
const TitleBar = styled.header`
  display: flex; align-items: center; height: 35px; flex: none; overflow: hidden;
  border-top: 1px solid ${LINE}; border-bottom: 1px solid ${LINE};
`;
const Brand = styled.div`
  display: flex; align-items: center; gap: 5px; width: 134px; padding-left: 5px; flex: none;
  font: italic 14px/18px "Open Sans", sans-serif; b { font-weight: 700; }
`;
const Menu = styled.nav`display: flex; align-items: center;`;
const MenuButton = styled.button`width: ${(p) => p.$w}px; height: 32px; flex: none; white-space: nowrap;`;
const Quick = styled(Row)`margin-left: 13px; flex: 1;`;
const DocTitle = styled.span`flex: 1; text-align: center; color: #c9c9c9; padding-left: 12px;`;
const SearchBox = styled.label`
  display: flex; align-items: center; width: 202px; height: 23px; flex: none; padding: 0 3px 0 4px; background: #fff; border: 1px solid #bbb;
  input { flex: 1; min-width: 0; padding-left: 5px; outline: 0; color: #666; }
`;
const WinControls = styled(Row)`flex: none; padding-left: 3px; margin-right: -8px;`;

/* ribbon */
const Ribbon = styled.section`display: flex; height: 82px; flex: none; padding: 1px 0 3px 6px; border-bottom: 1px solid ${LINE};`;
const Big = styled.button`
  display: flex; flex-direction: column; align-items: center; width: ${(p) => p.$w}px; height: 78px; flex: none; padding-top: 5px;
  white-space: pre; text-align: center; color: ${(p) => (p.$off ? "#888" : WHITE)};
  ${(p) => p.$active && css`background: #2b2b2b; border: 1px solid #000; padding-top: 4px;`}
  ${(p) => p.$exit && css`background: linear-gradient(#2b2b2b 57px, #000 57px 58px, #4d4d4d 58px); border-color: #1c1c1c;`}
`;
const BigLabel = styled.span`padding-top: 1px; height: 42px; flex: none;`;
const Tools = styled.div`display: grid; grid-template: repeat(3, 26px) / 40px 40px 40px 27px 26px; width: 174px; flex: none;`;
const Stack = styled.div`display: flex; flex-direction: column; width: 175px; flex: none;`;
const StackRow = styled.div`display: flex; align-items: center; height: 26px;`;
const StackButton = styled.button`display: flex; align-items: center; gap: 6px; flex: 1; padding-left: 2px; text-align: left; white-space: nowrap;`;

const BigTool = ({ icon, label, w, drop, ...rest }) => (
  <Big type="button" $w={w} {...rest}>
    <Icon name={icon} /><BigLabel>{label}</BigLabel>{drop && <Caret />}
  </Big>
);
const Tool = ({ name, drop = true }) => (
  <Row><IB name={name} />{drop && <CaretButton type="button" aria-label={`${name} options`} />}</Row>
);

/* body */
const Body = styled.div`
  flex: 1; min-height: 0; display: grid; grid-template: 22px minmax(0, 1fr) / 206px minmax(0, 1fr);
`;
const Tabs = styled.nav`grid-area: 1 / 1 / 2 / 3; z-index: 1; display: flex; justify-self: start; border-bottom: 1px solid ${LINE};`;
const Tab = styled.button`
  width: ${(p) => p.$w}px; height: 21px; border-right: 1px solid ${LINE}; background: ${(p) => (p.$active ? PANEL : "#2c2c2c")};
  font-weight: ${(p) => (p.$active ? 700 : 400)}; white-space: nowrap;
`;
const Panel = styled.aside`grid-area: 2 / 1; display: flex; flex-direction: column; border-right: 1px solid ${LINE}; padding-right: 3px;`;
const Grip = styled.div`
  height: 20px; flex: none; border-bottom: 1px solid ${LINE}; padding-top: 4px;
  background: linear-gradient(${LINE}, ${LINE}) 0 4px / 100% 1px no-repeat;
  display: flex; align-items: center; justify-content: center;
`;
const Dot = styled.i`width: 8px; height: 8px; border-radius: 50%; background: #ccc; border: 2px solid #888; flex: none;`;
const PanelTabs = styled.div`display: grid; grid-template-columns: 42px 40px repeat(3, 40px); height: 26px; margin-top: 4px; flex: none;`;
const PanelTab = styled.button`
  display: flex; align-items: center; justify-content: center; border: 1px solid ${LINE}; border-left: 0;
  background: ${(p) => (p.$active ? PANEL : "#2c2c2c")}; ${(p) => p.$active && "border-bottom-color: transparent;"}
`;
const PanelHead = styled.h2`display: flex; align-items: center; gap: 5px; height: 36px; margin: 0; padding: 0 5px 0 7px; font: 700 12px/16px "Open Sans", sans-serif; flex: none;`;
const PanelActions = styled.div`display: flex; align-items: center; height: 26px; padding-left: 3px; flex: none;`;
const Message = styled.section`margin: 1px 0 0 4px; border-top: 1px solid #aaa;`;
const MessageHead = styled.h3`display: flex; align-items: center; justify-content: space-between; height: 20px; margin: 0; padding: 0 3px 0 4px; font-size: 12px;`;
const Note = styled.p`margin: 0; height: 24px; padding: 0 4px; background: #ffff80; color: #222; line-height: 25px; white-space: nowrap;`;
const PanelFoot = styled.div`margin-top: auto; height: 4px; border-top: 1px solid ${LINE};`;

const Viewport = styled.section`
  grid-area: 1 / 2 / 3 / 3; position: relative; overflow: hidden; background: #fff; color: #000; min-width: 0;
  > svg { position: absolute; inset: 0; width: 100%; height: 100%; }
`;
const Handle = styled.button`position: absolute; left: 0; top: 408px; width: 8px; height: 39px; background: ${PANEL}; border: 1px solid #888; border-left: 0; display: flex; align-items: center; justify-content: center;`;
const TreeLabel = styled.button`
  position: absolute; left: 1px; top: 28px; display: flex; align-items: center; gap: 4px; white-space: pre;
  i { border: 4px solid transparent; border-left: 5px solid #111; border-right: 0; margin: 0 8px 0 5px; }
`;
const ViewName = styled.strong`position: absolute; left: 12px; bottom: 3px; color: #111;`;
const HeadsUp = styled.div`position: absolute; left: 690px; top: 2px; display: flex; align-items: center;`;
const DocControls = styled.div`position: absolute; right: -9px; top: 2px; display: flex;`;
const BigCross = styled.button`position: absolute; right: -5px; top: 41px; width: 38px; height: 38px;`;

/* bottom */
const Sheets = styled.nav`display: flex; height: 15px; flex: none; border-top: 1px solid ${LINE};`;
const SheetNav = styled.div`display: flex; width: 92px; padding-left: 27px; background: #b5b5b5; border-top: 1px solid #222; flex: none;`;
const SheetArrow = styled.button`width: 16px; background: #a6a6a6; border: 1px solid #c6c6c6; border-left-color: #8c8c8c; display: flex; align-items: center; justify-content: center;`;
const Sheet = styled.button`
  width: ${(p) => p.$w}px; line-height: 11px; padding-bottom: 3px; font-weight: ${(p) => (p.$active ? 700 : 400)}; white-space: nowrap;
  ${(p) => !p.$active && css`background: #2c2c2c; border-left: 1px solid #999; border-right: 1px solid #999; padding-right: 8px;`}
`;
const Filters = styled.div`display: flex; align-items: center; height: 34px; flex: none; padding: 2px 0 0 2px; border-bottom: 1px solid ${LINE};`;
const GripBar = styled.i`width: ${(p) => p.$w || 10}px; height: 27px; flex: none; background: repeating-linear-gradient(#ddd 0 2px, transparent 2px 4px) 2px 0 / 3px 100% no-repeat;`;
const Status = styled.footer`display: flex; align-items: center; height: 18px; flex: none; padding: 0 5px 0 1px; white-space: nowrap;`;
const StatusCell = styled.span`width: ${(p) => (p.$w ? p.$w + "px" : "auto")}; text-align: ${(p) => p.$align || "left"}; flex: none; em { color: #00ffff; font-style: normal; }`;

const Taskbar = styled.footer`display: flex; align-items: center; background: #222222; font-size: 12px; line-height: 18px; overflow: hidden;`;
const LeftClock = styled.time`width: 33px; flex: none; display: flex; flex-direction: column; align-items: flex-end; white-space: nowrap;`;
const Start = styled.button`width: 56px; height: 40px; display: flex; align-items: center; justify-content: center; flex: none; padding-left: 6px;`;
const TaskSearch = styled.label`
  display: flex; align-items: center; width: 288px; height: 39px; flex: none; padding: 0 4px 0 11px; background: #303030; border: 1px solid #4e4e4e; align-self: flex-end;
  input { flex: 1; min-width: 0; padding-left: 8px; outline: 0; font-size: 16px; &::placeholder { color: #d6d6d6; opacity: 1; } }
`;
const CaseTile = styled.span`width: 72px; height: 32px; border-radius: 6px; background: #474747; display: flex; align-items: center; justify-content: center; flex: none;`;
const TaskButton = styled.button`
  width: 49px; height: 40px; flex: none; display: flex; flex-direction: column; align-items: center; justify-content: center; position: relative;
  ${(p) => p.$active && css`background: #4d4d4d; border-bottom: 2px solid #aaa;`}
`;
const Year = styled.b`position: absolute; right: 10px; bottom: 4px; font: 700 9px/9px "Open Sans", sans-serif; text-shadow: 0 0 2px #000, 0 0 2px #000;`;
const Weather = styled.button`display: flex; align-items: center; gap: 9px; font-size: 14px; white-space: pre; margin-right: 17px;`;
const Clock = styled.time`width: 72px; margin-right: 8px; flex: none; text-align: center; display: flex; flex-direction: column;`;

/* left window sliver */
const Sliver = styled.aside`width: 41px; flex: none; display: flex; flex-direction: column; overflow: hidden; background: #f0f0f0; color: #444; border-top: 1px solid #000;`;
const SliverTop = styled.div`height: 47px; flex: none; background: #fff; border-bottom: 1px solid #ddd;`;
const SliverBand = styled.div`height: 92px; flex: none; background: #f5f6f8; border-bottom: 1px solid #ddd;`;
const Ruler = styled.div`
  height: 19px; flex: none; border-bottom: 1px solid #8b9bb5; font: 11px/16px "Open Sans", sans-serif; color: #53637c; padding-left: 1px;
  background: linear-gradient(90deg, transparent 21px, #e00 21px 22px, transparent 22px), repeating-linear-gradient(90deg, transparent 0 8px, #888 8px 9px, transparent 9px 10px) 0 100% / 100% 4px no-repeat, #f7f8fb;
`;
const SliverBody = styled.div`flex: 1; min-height: 0; display: flex;`;
const SliverDoc = styled.div`width: 18px; display: flex; flex-direction: column; overflow: hidden; background: linear-gradient(#f0f1f6 0, #f0f1f6 180px, #dfe2ee 560px, #f6f7fb 800px);`;
const DarkBox = styled.div`height: ${(p) => p.$h}px; margin-top: ${(p) => p.$mt || 0}px; flex: none; background: ${PANEL}; border-bottom: 1px solid ${LINE}; display: flex; align-items: ${(p) => p.$a || "center"};`;
const PaneTabs = styled.div`margin-top: 53px; flex: none; border-top: 1px solid ${LINE};`;
const PaneTab = styled.button`display: flex; align-items: center; width: 18px; height: 24px; overflow: hidden; background: ${(p) => (p.$light ? "#b5b5b5" : "#2d2d2d")}; border-bottom: 1px solid ${LINE};`;
const BackArrow = styled.svg`margin-top: 8px;`;
const Edge = styled.div`width: 7px; background: linear-gradient(90deg, #a9b6cd, #c3cfe2 6px, #fff 6px); display: flex; align-items: flex-start;`;
const EdgeHandle = styled.i`width: 5px; height: 5px; margin-top: 543px; background: #fff; border: 1px solid #444;`;
const Scroll = styled.div`width: 16px; display: flex; flex-direction: column; align-items: center;`;
const Thumb = styled.div`width: 15px; flex: 620 0 0; background: #cdcdcd;`;
const Track = styled.div`flex: 184 0 0;`;
const SliverFoot = styled.div`height: 42px; flex: none; border-top: 1px solid #ddd; display: flex; flex-direction: column;`;
const FootRow = styled.div`height: ${(p) => p.$h}px; display: flex; align-items: center; justify-content: flex-end; padding-right: 3px; border-bottom: 1px solid #ccc;`;

/* ---------- scene ---------- */

const columns = [
  { x: 0, s: [[0, "#fefefe"], [276, "#fefefe"], [316, "#f9f9fb"], [383, "#eceef2"], [423, "#e6e8ee"], [466, "#e2e5ee"], [500, "#e3e6ee"], [508, "#e7e7eb"], [536, "#eeeff2"], [583, "#f9f9fb"], [610, "#fdfdfd"], [740, "#fdfdfd"], [856, "#f7f8fa"]] },
  { x: 370, s: [[0, "#fefefe"], [216, "#fdfdfd"], [316, "#f4f4f6"], [383, "#e7e9ed"], [433, "#dfe3ec"], [466, "#e3e4ea"], [500, "#e7e8ec"], [536, "#eff0f2"], [583, "#fafafb"], [610, "#fdfdfd"], [740, "#fefefe"], [856, "#f7f8fa"]] },
  { x: 654, s: [[0, "#fefefe"], [190, "#fdfdfd"], [217, "#f9faf9"], [277, "#f3f4f4"], [336, "#ebecee"], [395, "#e3e4e9"], [427, "#dde1ec"], [455, "#e1e4ea"], [494, "#e7e8eb"], [534, "#f1f2f4"], [573, "#fbfbfb"], [613, "#fdfdfd"], [800, "#fefefe"], [856, "#f9fafb"]] },
  { x: 854, s: [[0, "#fefefe"], [140, "#fdfdfd"], [202, "#f3f4f6"], [245, "#eeeff2"], [297, "#e6e7ea"], [336, "#e0e4ed"], [395, "#dce0ea"], [425, "#dbdfea"], [455, "#dfe3eb"], [474, "#e4e6ea"], [514, "#edeef1"], [553, "#f7f8f8"], [590, "#fdfdfd"], [800, "#fefefe"], [856, "#f9fafb"]] },
  { x: 994, s: [[0, "#fbfbfc"], [59, "#f7f8fa"], [119, "#f3f4f7"], [178, "#ebecf0"], [206, "#e8e9ee"], [257, "#e3e5ea"], [289, "#dee2ec"], [356, "#dadfe9"], [427, "#d9dde8"], [463, "#dde1ec"], [482, "#e4e6eb"], [514, "#ededf0"], [553, "#f8f8f8"], [590, "#fdfdfd"], [800, "#fefefe"], [856, "#f9fafb"]] },
  { x: 1154, s: [[0, "#f3f4f7"], [32, "#eff1f4"], [71, "#e7eaf2"], [158, "#e1e5ed"], [206, "#dfe2ec"], [277, "#dbdfe9"], [376, "#d7dbe5"], [419, "#d6dae4"], [455, "#dadee9"], [474, "#dfe3eb"], [498, "#e6e8ec"], [534, "#f2f3f4"], [578, "#fcfcfc"], [600, "#fefefe"], [740, "#fefefe"], [856, "#f8f9fa"]] },
  { x: 1354, s: [[0, "#e6e9ef"], [53, "#e1e4eb"], [103, "#dfe2e9"], [183, "#dddfea"], [283, "#dadee8"], [373, "#d6dae6"], [423, "#d7dbe6"], [458, "#dee0ea"], [480, "#e4e7ef"], [513, "#eeeff3"], [573, "#fbfbfc"], [600, "#fefefe"], [710, "#fefefe"], [764, "#fafbfb"], [856, "#f5f7f8"]] },
  { x: 1514, s: [[0, "#ecedf0"], [83, "#e6e9f0"], [183, "#e4e7ef"], [283, "#dfe3eb"], [363, "#dbdee8"], [413, "#dadde7"], [453, "#dfe1eb"], [493, "#e5e8ef"], [533, "#f0f0f3"], [583, "#fbfbfc"], [623, "#fefefe"], [713, "#f9fafa"], [856, "#f2f3f7"]] },
  { x: 1674, s: [[0, "#f1f1f4"], [143, "#ecedf0"], [193, "#e8eaf1"], [283, "#e3e6ee"], [383, "#dddfe9"], [423, "#dcdfe9"], [483, "#e4e7ee"], [523, "#ebebef"], [583, "#f6f7f9"], [628, "#fcfcfc"], [733, "#f5f6f8"], [856, "#f0f1f5"]] },
];

const Backdrop = () => (
  <svg viewBox="0 0 1674 856" preserveAspectRatio="none" aria-hidden="true">
    <defs>
      {columns.map((c, i) => (
        <React.Fragment key={c.x}>
          <linearGradient id={`shade${i}`} x1="0" y1="0" x2="0" y2="1">
            {c.s.map(([y, col]) => <stop key={y} offset={y / 856} stopColor={col} />)}
          </linearGradient>
          {i > 0 && (
            <g>
              <linearGradient id={`fade${i}`} gradientUnits="userSpaceOnUse" x1={columns[i - 1].x} y1="0" x2={c.x} y2="0">
                <stop offset="0" stopColor="#fff" stopOpacity="0" /><stop offset="1" stopColor="#fff" />
              </linearGradient>
              <mask id={`blend${i}`} maskUnits="userSpaceOnUse" x="0" y="0" width="1674" height="856" mask-type="alpha">
                <rect width="1674" height="856" fill={`url(#fade${i})`} />
              </mask>
            </g>
          )}
        </React.Fragment>
      ))}
    </defs>
    {columns.map((c, i) => <rect key={c.x} width="1674" height="856" fill={`url(#shade${i})`} mask={i ? `url(#blend${i})` : undefined} />)}
  </svg>
);

const splits = [457, 552, 661, 754, 852, 948];
const marks = [
  { x: 413, y: 215, d: "M-4 0h9" },
  ...splits.map((x) => ({ x, y: 215, d: "M-4 5L4-5" })),
  { x: 383, y: 478, d: "M0-5v10" },
  { x: 1292, y: 478, d: "M0-5v10" },
  { x: 824, y: 770, d: "M-4 0h9" },
];

const SketchDrawing = () => (
  <svg viewBox="1 0 1674 856" preserveAspectRatio="xMinYMin meet" role="img" aria-label="Rectangle sketch">
    <rect x="370" y="201" width="909" height="555" fill="#000" fillOpacity=".3" />
    <rect x="370" y="201" width="909" height="555" fill="none" stroke="#0808f0" strokeWidth="2" />
    {[[370, 201], [1279, 201], [370, 756], [1279, 756], ...splits.map((x) => [x, 201])].map(([x, y]) => (
      <circle key={`${x}-${y}`} cx={x} cy={y} r="2.600" fill="#0000e8" />
    ))}
    {marks.map((m) => (
      <g key={`${m.x}-${m.y}`} transform={`translate(${m.x} ${m.y})`}>
        <rect x="-6" y="-6" width="12" height="12" fill="#55a8fc" />
        <path d={m.d} stroke="#111" strokeWidth="1.500" />
      </g>
    ))}
    <g fill="#f00" stroke="#f00">
      <path d="M711.500 474v29.500H727" fill="none" />
      <path d="M711.500 471l2 8h-4zM728 503.500l-8 2v-4z" strokeWidth=".6" />
    </g>
    <g>
      <path d="M42 798v-25" stroke="#00c400" strokeWidth="4" />
      <path d="M42 769l4 8h-8z" fill="#009800" />
      <path d="M44 798h20" stroke="#c00000" strokeWidth="4" />
      <path d="M71 798l-9 4v-8z" fill="#a00000" />
      <circle cx="42" cy="798" r="4" fill="#0000a0" />
      <text x="42" y="762" textAnchor="middle" fontFamily="Open Sans" fontSize="9" fill="#0c0">Y</text>
      <text x="76" y="799" fontFamily="Open Sans" fontSize="9" fill="#e00">X</text>
    </g>
  </svg>
);

const filterNames = ["fPoint", "fEdge", "fFace", "fSurf", "fSolid", "fAxis", "fPlane", "fSkPt", "fSketch", "fSeg", "fMid", "fCenter", "fCl", "fDim", "fFinish", "fGtol", "fNote", "fDatum", "fWeld", "fBead", "fTarget", "fThread", "fBlock", "fCom", "fConn", "fRoute", "fMeshFace", "fMeshEdge", "fMeshPt"];
const blockNames = ["bNew", "bEdit", "bInsert", "bAdd", "bRebuild", "bSave", "bExplode", "bBelt"];
const macroNames = ["play", "stop", "record", "macroNew", "macroEdit", "macroUser"];
const quickTools = [["home", 0], ["newdoc", 1], ["open", 1], ["save", 1], ["print", 1], ["undo", 1], ["redo", 2], ["cursor", 1]];
const menus = [["File", 35], ["Edit", 36], ["View", 41], ["Insert", 45], ["Tools", 43], ["PhotoView 360", 94], ["Window", 58]];
const tabs = [["Features", 60], ["Sketch", 56], ["Surfaces", 60], ["Sheet Metal", 78], ["Weldments", 76], ["Data Migration", 95], ["Evaluate", 59], ["Render Tools", 84]];
const tasks = ["taskview", "explorer", "outlook", "green", "cblue", "sw", "brave", "snip", "keys", "factory"];

const BrandMark = () => (
  <svg width="21" height="20" viewBox="0 0 21 20" aria-hidden="true">
    <path d="M5 1q6-1 6 2 0 3-8 6M4 9q7-2 6 2 0 5-9 8l5-9M20 6q-7-1-7 2 0 1 2 3 3 3-1 5-2 1-4 1" fill="none" stroke="#f2f2f2" strokeWidth="1.700" />
  </svg>
);

const LeftWindow = () => (
  <Sliver>
    <SliverTop>
      <svg width="41" height="46" viewBox="0 0 41 46" aria-hidden="true">
        <path d="M11 5l10 10M21 5L11 15M4 36l4-4 4 4" fill="none" stroke="#777" />
        <circle cx="30" cy="34" r="8" fill="#0a5cc0" />
        <path d="M27.500 32q0-3 2.500-3t2.500 2.200q0 1.500-2.500 3v1.500M30 37v2" fill="none" stroke="#fff" strokeWidth="1.800" />
      </svg>
    </SliverTop>
    <SliverBand />
    <Ruler>1900</Ruler>
    <SliverBody>
      <SliverDoc>
        <DarkBox $h={34} $mt={5}><svg width="14" height="14" viewBox="0 0 14 14"><path d="M-1 2l10 10M9 2L-1 12" stroke="#fff" strokeWidth="1.500" /></svg></DarkBox>
        <DarkBox $h={82} $a="flex-end"><svg width="14" height="22" viewBox="0 0 14 22"><path d="M0 12l5-5 5 5" fill="none" stroke="#fff" strokeWidth="1.800" /></svg></DarkBox>
        <BackArrow width="8" height="14" viewBox="0 0 8 14"><path d="M5 2L0 7l5 5" fill="none" stroke="#aaa" strokeWidth="1.300" /></BackArrow>
        <PaneTabs>
          {["home", "books", "folder", "palette", "ball", "list", "sync"].map((n) => (
            <PaneTab key={n} type="button" aria-label={n} $light={n === "sync"}>
              <svg width="18" height="20" viewBox="4 0 18 20" aria-hidden="true">{glyphs[n]}</svg>
            </PaneTab>
          ))}
        </PaneTabs>
      </SliverDoc>
      <Edge><EdgeHandle /></Edge>
      <Scroll>
        <svg width="16" height="17" viewBox="0 0 16 17"><path d="M4 11l4-4 4 4" fill="none" stroke="#555" strokeWidth="1.800" /></svg>
        <Thumb /><Track />
        <svg width="16" height="17" viewBox="0 0 16 17"><path d="M4 6l4 4 4-4" fill="none" stroke="#555" strokeWidth="1.800" /></svg>
      </Scroll>
    </SliverBody>
    <SliverFoot>
      <FootRow $h={17}><svg width="38" height="15" viewBox="0 0 38 15"><path d="M0 0h7v15H0z" fill="#cdcdcd" /><path d="M14 3l4 4-4 4" fill="none" stroke="#555" strokeWidth="1.800" /></svg></FootRow>
      <FootRow $h={25}><svg width="18" height="18" viewBox="0 0 18 18"><circle cx="9" cy="9" r="7.500" fill="#f8f8f8" stroke="#777" /><path d="M5 9h8M9 5v8" stroke="#444" strokeWidth="2" /></svg></FootRow>
    </SliverFoot>
  </Sliver>
);

export default function App() {
  return (
    <Page>
      <Global />
      <Desktop>
        <LeftWindow />
        <Main>
          <TitleBar>
            <Brand><BrandMark /><span><b>SOLID</b>WORKS</span></Brand>
            <Menu>
              {menus.map(([m, w]) => <MenuButton key={m} type="button" $w={w}>{m}</MenuButton>)}
              <IB name="pushpin" label="Pin menu" w={26} size={14} />
            </Menu>
            <Divider />
            <Quick>
              {quickTools.map(([n, d]) => (
                <Row key={n}><IB name={n} w={n === "home" ? 34 : 26} size={18} />{d > 0 && <CaretButton type="button" $w={18} $c={d === 2 ? "#888" : undefined} aria-label={`${n} options`} />}</Row>
              ))}
              <IB name="light" w={28} size={20} /><IB name="options" w={32} size={18} /><IB name="gear" w={28} size={18} />
              <CaretButton type="button" $w={16} aria-label="Settings menu" />
              <DocTitle>Sketch1 of Part1 *</DocTitle>
            </Quick>
            <SearchBox>
              <Icon name="prompt" size={18} />
              <input type="text" defaultValue="split" aria-label="Search commands" />
              <Icon name="searchdark" size={16} />
              <CaretButton type="button" $c="#777" $w={14} aria-label="Search scope" />
            </SearchBox>
            <WinControls>
              {["user", "helpring", "min", "span", "restore"].map((n) => <IB key={n} name={n} w={36} size={n === "user" || n === "helpring" ? 18 : 20} />)}
            </WinControls>
          </TitleBar>

          <Ribbon>
            <BigTool icon="exit" label={"Exit\nSketch"} w={44} drop $active $exit />
            <BigTool icon="smart" label={"Smart\nDimension"} w={66} drop />
            <Divider />
            <Tools>
              <Tool name="line" /><Tool name="circle" /><Tool name="spline" /><Tool name="surfgrid" drop={false} /><IB name="split" w={26} active />
              <Tool name="rect" /><Tool name="arc" /><Tool name="ellipse" /><Tool name="text" drop={false} /><span />
              <Tool name="slot" /><Tool name="polygon" drop={false} /><Tool name="fillet" /><Tool name="point" drop={false} />
            </Tools>
            <Divider />
            <BigTool icon="trim" label={"Trim\nEntities"} w={49} drop />
            <BigTool icon="convert" label={"Convert\nEntities"} w={50} drop />
            <BigTool icon="offset" label={"Offset\nEntities"} w={48} />
            <BigTool icon="offsurf" label={"Offset\nOn\nSurface"} w={48} $off disabled />
            <Stack>
              <StackRow><StackButton type="button"><Icon name="mirror" />Mirror Entities</StackButton></StackRow>
              <StackRow><StackButton type="button"><Icon name="pattern" />Linear Sketch Pattern</StackButton><CaretButton type="button" $w={16} aria-label="Pattern options" /></StackRow>
              <StackRow><StackButton type="button"><Icon name="move" />Move Entities</StackButton><CaretButton type="button" $w={16} aria-label="Move options" /></StackRow>
            </Stack>
            <Divider />
            <BigTool icon="relations" label={"Display/Delete\nRelations"} w={85} drop />
            <BigTool icon="repair" label={"Repair\nSketch"} w={45} />
            <Divider />
            <BigTool icon="quick" label={"Quick\nSnaps"} w={43} drop />
            <Divider />
            <BigTool icon="rapid" label={"Rapid\nSketch"} w={46} />
            <BigTool icon="instant" label="Instant2D" w={59} />
            <BigTool icon="shaded" label={"Shaded\nSketch\nContours"} w={58} $active />
          </Ribbon>

          <Body>
            <Tabs>{tabs.map(([t, w]) => <Tab key={t} type="button" $w={w} $active={t === "Sketch"}>{t}</Tab>)}</Tabs>
            <Panel>
              <Grip><Dot /></Grip>
              <PanelTabs>
                {["part", "list", "config", "target", "ball"].map((n) => <PanelTab key={n} type="button" aria-label={n} $active={n === "list"}><Icon name={n} size={18} /></PanelTab>)}
              </PanelTabs>
              <PanelHead><Icon name="split" />Split Entities<Spacer /><Icon name="helpball" /></PanelHead>
              <PanelActions><IB name="cancel" w={26} size={16} /><IB name="keep" w={20} size={18} /></PanelActions>
              <Message>
                <MessageHead>Message<Icon name="chev" /></MessageHead>
                <Note>Click on the sketch entity to split.</Note>
              </Message>
              <PanelFoot />
            </Panel>
            <Viewport>
              <Backdrop />
              <SketchDrawing />
              <Handle type="button" aria-label="Collapse panel"><Dot /></Handle>
              <TreeLabel type="button"><i /><Icon name="part" size={18} />{"Part1  (Default<<Default>..."}</TreeLabel>
              <ViewName>*Front</ViewName>
              <HeadsUp>
                {["zoomfit", "zoomarea", "prev", "section"].map((n) => <IB key={n} name={n} w={26} size={18} />)}
                <IB name="orient" w={26} size={18} /><CaretButton type="button" $c="#888" $w={14} aria-label="View orientation" />
                <IB name="display" w={26} size={18} /><CaretButton type="button" $c="#888" $w={14} aria-label="Display style" />
                <IB name="eye" w={26} size={18} /><CaretButton type="button" $c="#888" $w={14} aria-label="Hide or show items" />
                <IB name="editapp" w={26} size={18} /><IB name="scene" w={26} size={18} />
                <CaretButton type="button" $c="#888" $w={14} aria-label="Apply scene" />
                <IB name="monitor" w={26} size={18} /><CaretButton type="button" $c="#888" $w={14} aria-label="View settings" />
              </HeadsUp>
              <DocControls>{["dleft", "dright", "dmin", "drestore"].map((n) => <IB key={n} name={n} w={26} />)}</DocControls>
              <BigCross type="button" aria-label="Cancel command">
                <svg width="38" height="38" viewBox="0 0 38 38"><path d="M2 9l7-7 10 10L29 2l7 7-10 10 10 10-7 7-10-10L9 36l-7-7 10-10z" fill="#e9c5c6" stroke="#d3bcc2" strokeWidth="2" strokeLinejoin="round" /></svg>
              </BigCross>
            </Viewport>
          </Body>

          <Sheets>
            <SheetNav>
              {["M3 1v8M9 1L5 5l4 4z", "M8 1L3 5l5 4z", "M3 1l5 4-5 4z", "M8 1v8M2 1l4 4-4 4z"].map((d) => (
                <SheetArrow key={d} type="button" aria-label="Scroll tabs"><svg width="10" height="10" viewBox="0 0 10 10"><path d={d} fill="#8a8a8a" stroke="#8a8a8a" /></svg></SheetArrow>
              ))}
            </SheetNav>
            <Sheet type="button" $w={57} $active>Model</Sheet>
            <Sheet type="button" $w={108}>Motion Study 1</Sheet>
          </Sheets>
          <Filters>
            <GripBar $w={12} />
            <IB name="filt" w={26} size={18} /><IB name="filts" w={27} /><IB name="filtp" w={27} /><IB name="cursor" w={27} size={18} />
            <CaretButton type="button" $w={14} aria-label="Selection mode" /><IB name="cursoff" w={30} size={18} />
            <Divider $after={6} />
            {filterNames.map((n) => <IB key={n} name={n} w={27} />)}
            <Divider $before={6} /><GripBar $w={13} />
            {blockNames.map((n) => <IB key={n} name={n} w={27} />)}
            <Divider $before={8} /><GripBar $w={13} />
            {macroNames.map((n) => <IB key={n} name={n} w={27} />)}
            <Divider $before={8} />
          </Filters>
          <Status>
            <StatusCell>SOLIDWORKS Professional 2021 SP5.1</StatusCell>
            <Spacer />
            <StatusCell $w={196}>Length: .47316097in [<em>12.0183mm</em>]</StatusCell>
            <StatusCell $w={93}>Under Defined</StatusCell>
            <StatusCell $w={103}>Editing Sketch1</StatusCell>
            <Divider />
            <StatusCell $w={122} $align="right">IPS</StatusCell>
            <StatusCell $w={34} $align="right"><svg width="34" height="6" viewBox="0 0 34 6"><path d="M27 5l3-4 3 4z" fill="#eee" /></svg></StatusCell>
          </Status>
        </Main>
      </Desktop>

      <Taskbar>
        <LeftClock><span>45 AM</span><span>9/2024</span></LeftClock>
        <Start type="button" aria-label="Start"><Icon name="win" size={18} /></Start>
        <TaskSearch>
          <Icon name="search" />
          <input type="search" placeholder="Type here to search" aria-label="Type here to search" />
          <CaseTile><Icon name="case" size={24} /></CaseTile>
        </TaskSearch>
        {tasks.map((n) => <TaskButton key={n} type="button" aria-label={n} $active={n === "sw"}><Icon name={n} />{n === "sw" && <Year>2021</Year>}</TaskButton>)}
        <Spacer />
        <Weather type="button"><Icon name="weather" size={22} />{"78°F  Mostly cloudy"}</Weather>
        <IB name="up" w={24} size={16} /><IB name="net" w={24} size={22} /><IB name="vol" w={20} />
        <Clock><span>11:45 AM</span><span>7/9/2024</span></Clock>
      </Taskbar>
    </Page>
  );
}
